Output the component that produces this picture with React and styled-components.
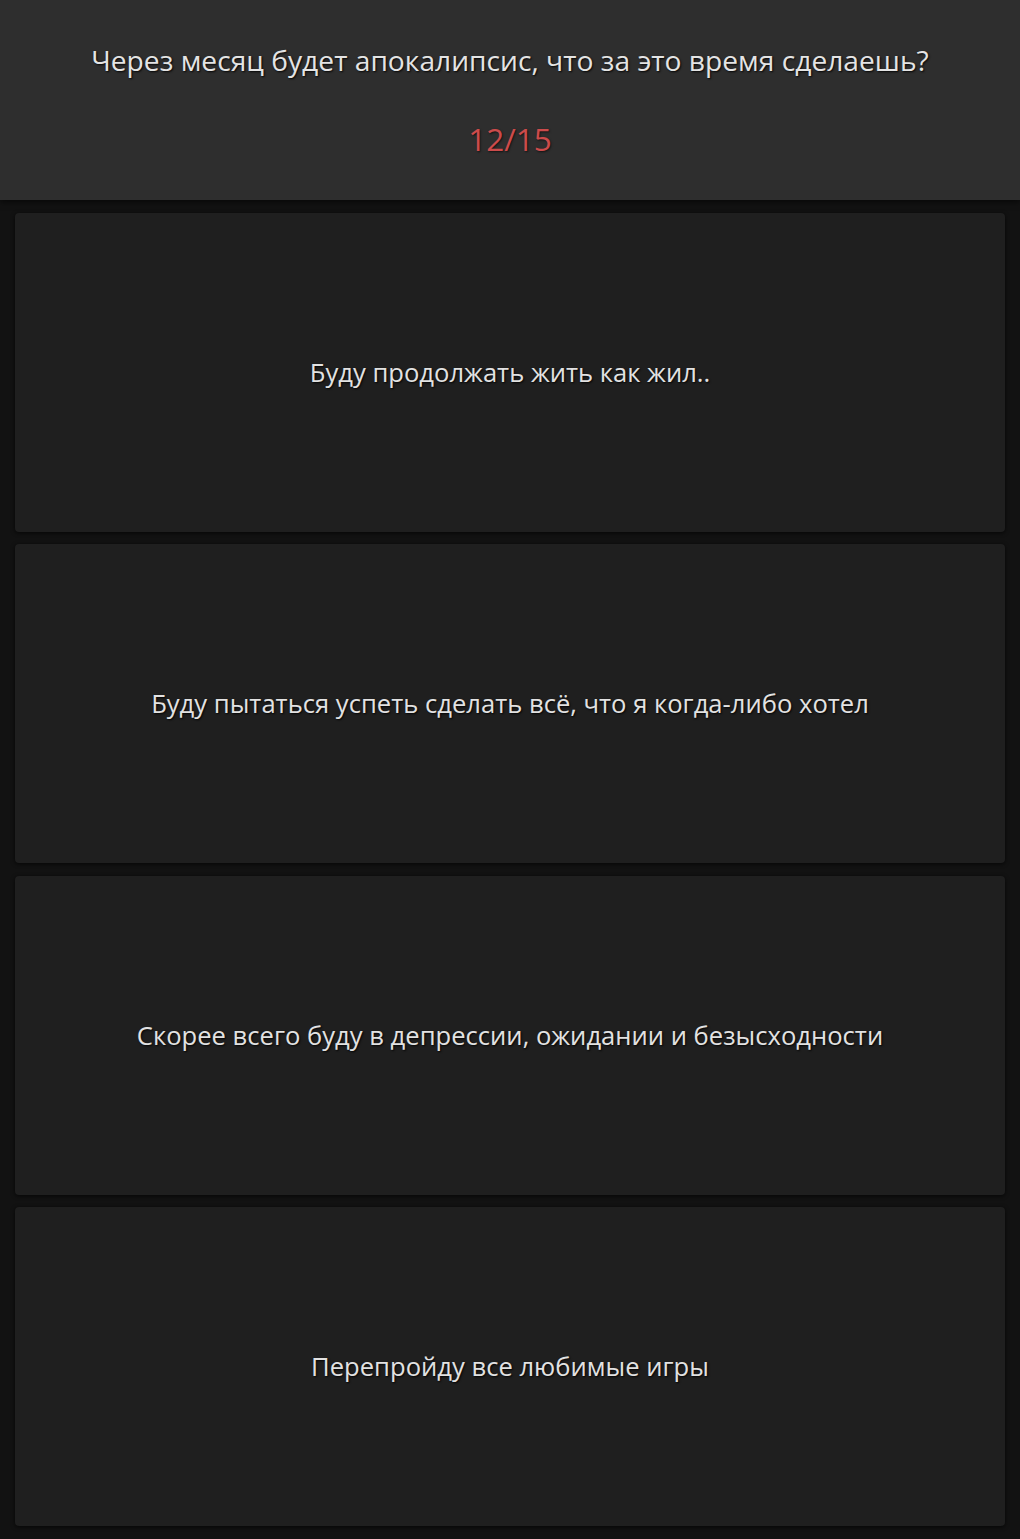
import React from 'react';
import styled, { createGlobalStyle } from 'styled-components';

const GlobalStyle = createGlobalStyle`
  html, body {
    margin: 0;
    padding: 0;
    background: #121212;
  }
  body {
    font-family: "Open Sans", "Noto Sans", sans-serif;
  }
`;

const Page = styled.div`
  min-height: 1539px;
  background: #121212;
  display: flex;
  flex-direction: column;
`;

const Header = styled.header`
  height: 200px;
  box-sizing: border-box;
  background: #2e2e2e;
  display: flex;
  flex-direction: column;
  align-items: center;
  padding-top: 41px;
  box-shadow: 0 2px 6px rgba(0, 0, 0, 0.6);
  position: relative;
  z-index: 1;
`;

const Question = styled.h1`
  margin: 0;
  font-size: 28.2px;
  font-weight: 400;
  line-height: 38px;
  color: #e4e4e4;
  text-shadow: 1px 1px 2px rgba(0, 0, 0, 0.9);
`;

const Counter = styled.div`
  margin-top: 40px;
  font-size: 31.5px;
  line-height: 40px;
  color: #cc4b4b;
  text-shadow: 1px 1px 2px rgba(0, 0, 0, 0.6);
`;

const Answers = styled.main`
  display: flex;
  flex-direction: column;
  gap: 12.4px;
  padding: 13px 15px 13px;
`;

const Answer = styled.button`
  height: 319px;
  border: none;
  border-radius: 4px;
  background: #1f1f1f;
  box-shadow: 0 1px 4px rgba(0, 0, 0, 0.7);
  display: flex;
  align-items: center;
  justify-content: center;
  font-family: inherit;
  font-size: 25.6px;
  color: #e2e2e2;
  text-shadow: 1px 1px 2px rgba(0, 0, 0, 0.9);
  cursor: pointer;
`;

const answers = [
  'Буду продолжать жить как жил..',
  'Буду пытаться успеть сделать всё, что я когда-либо хотел',
  'Скорее всего буду в депрессии, ожидании и безысходности',
  'Перепройду все любимые игры',
];

export default function App() {
  return (
    <Page>
      <GlobalStyle />
      <Header>
        <Question>Через месяц будет апокалипсис, что за это время сделаешь?</Question>
        <Counter>12/15</Counter>
      </Header>
      <Answers>
        {answers.map(a => (
          <Answer key={a}>{a}</Answer>
        ))}
      </Answers>
    </Page>
  );
}
